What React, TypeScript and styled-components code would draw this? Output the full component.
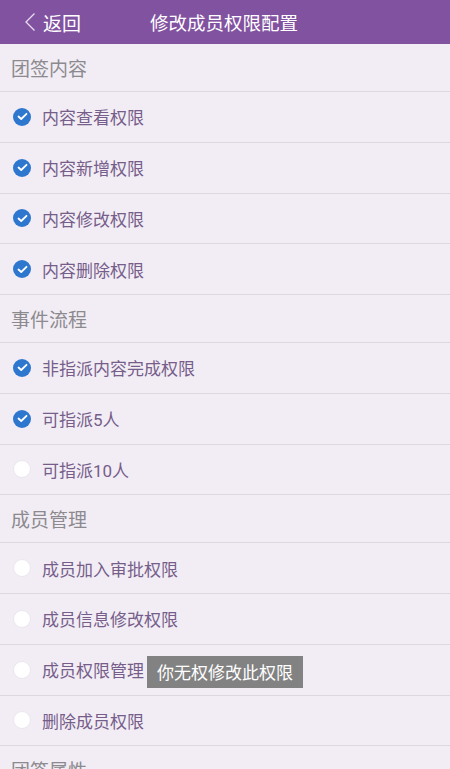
import React from "react";
import styled, { createGlobalStyle } from "styled-components";

const Global = createGlobalStyle`
  html, body { margin: 0; padding: 0; background: #f2edf5; }
  body { font-family: Roboto, "Noto Sans CJK SC", "Noto Sans", sans-serif; overflow: hidden; }
`;

const Page = styled.div`
  width: 450px;
  height: 769px;
  overflow: hidden;
  background: #f2edf5;
`;

const TopBar = styled.div`
  height: 44px;
  background: #8152a0;
  display: flex;
  align-items: center;
  position: relative;
  color: #fff;
`;

const Back = styled.div`
  display: flex;
  align-items: center;
  padding-left: 24px;
  font-size: 19px;
  gap: 7px;
`;

const Title = styled.div`
  position: absolute;
  left: 150px;
  top: 0;
  height: 44px;
  display: flex;
  align-items: center;
  font-size: 18.5px;
`;

const SectionHeader = styled.div`
  height: 47px;
  border-bottom: 1px solid #ddd7e1;
  display: flex;
  align-items: center;
  padding-left: 11px;
  font-size: 19px;
  color: #8c8a8e;
`;

const Row = styled.div`
  height: 49.75px;
  border-bottom: 1px solid #ddd7e1;
  display: flex;
  align-items: center;
  padding-left: 13px;
  position: relative;
`;

const Check = styled.div<{ $on: boolean }>`
  width: 18px;
  height: 18px;
  border-radius: 50%;
  box-sizing: border-box;
  background: ${(p) => (p.$on ? "#2e77cf" : "#ffffff")};
  border: ${(p) => (p.$on ? "none" : "1px solid #ebe6ee")};
  display: flex;
  align-items: center;
  justify-content: center;
  margin-right: 11px;
`;

const Label = styled.span`
  font-size: 17px;
  color: #765d8a;
`;

const Toast = styled.div`
  position: absolute;
  left: 147px;
  top: 11px;
  width: 156px;
  height: 32px;
  background: #828282;
  color: #fff;
  font-size: 17px;
  display: flex;
  align-items: center;
  justify-content: center;
`;

type Item = { label: string; on: boolean; toast?: boolean };
const sections: { title: string; items: Item[] }[] = [
  {
    title: "团签内容",
    items: [
      { label: "内容查看权限", on: true },
      { label: "内容新增权限", on: true },
      { label: "内容修改权限", on: true },
      { label: "内容删除权限", on: true },
    ],
  },
  {
    title: "事件流程",
    items: [
      { label: "非指派内容完成权限", on: true },
      { label: "可指派5人", on: true },
      { label: "可指派10人", on: false },
    ],
  },
  {
    title: "成员管理",
    items: [
      { label: "成员加入审批权限", on: false },
      { label: "成员信息修改权限", on: false },
      { label: "成员权限管理", on: false, toast: true },
      { label: "删除成员权限", on: false },
    ],
  },
  { title: "团签属性", items: [] },
];

export default function App() {
  return (
    <Page>
      <Global />
      <TopBar>
        <Back>
          <svg width="12" height="20" viewBox="0 0 12 20">
            <path d="M10.5 1.5 L2 10 L10.5 18.5" fill="none" stroke="#eadcf2" strokeWidth="1.3" />
          </svg>
          <span>返回</span>
        </Back>
        <Title>修改成员权限配置</Title>
      </TopBar>
      {sections.map((s) => (
        <React.Fragment key={s.title}>
          <SectionHeader>{s.title}</SectionHeader>
          {s.items.map((it) => (
            <Row key={it.label}>
              <Check $on={it.on}>
                {it.on && (
                  <svg width="11" height="9" viewBox="0 0 11 9">
                    <path d="M1.5 4.5 L4.2 7 L9.5 1.8" fill="none" stroke="#fff" strokeWidth="1.8" strokeLinecap="round" strokeLinejoin="round" />
                  </svg>
                )}
              </Check>
              <Label>{it.label}</Label>
              {it.toast && <Toast>你无权修改此权限</Toast>}
            </Row>
          ))}
        </React.Fragment>
      ))}
    </Page>
  );
}
